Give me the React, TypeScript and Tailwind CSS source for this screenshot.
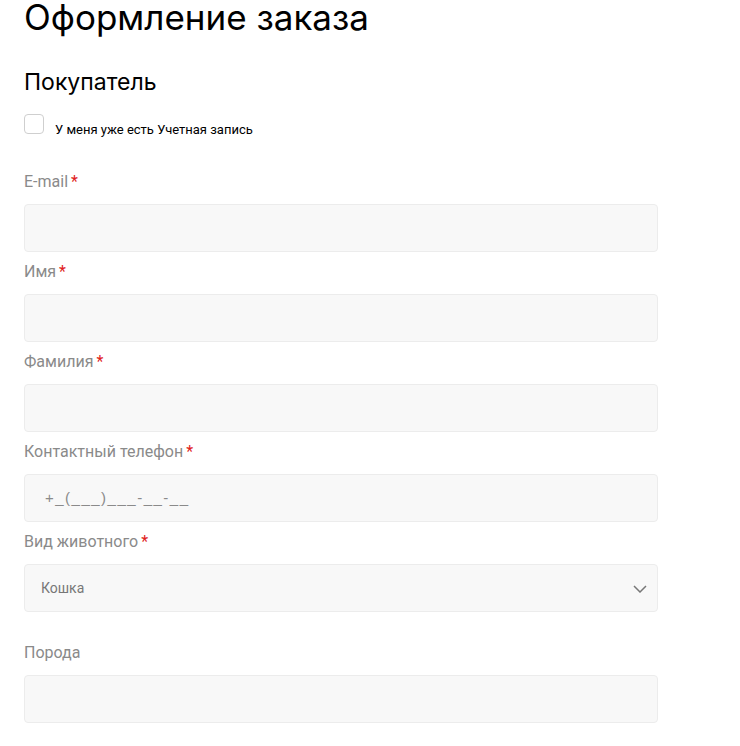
const fields = [
  { label: "E-mail", required: true },
  { label: "Имя", required: true },
  { label: "Фамилия", required: true },
  { label: "Контактный телефон", required: true, placeholder: "+_(___)___-__-__" },
];

function Label({ text, required }: { text: string; required?: boolean }) {
  return (
    <div className="h-[22px] text-[16px] leading-[22px] text-[#8a8a8a]">
      {text}
      {required ? <span className="ml-[3px] text-[#e02020]">*</span> : null}
    </div>
  );
}

export default function App() {
  return (
    <div
      className="min-h-screen bg-white pl-6"
      style={{ fontFamily: "Roboto, 'Noto Sans', sans-serif" }}
    >
      <div className="w-[634px]">
        <h1
          className="-mt-[6px] text-[35px] leading-[46px] text-black"
          style={{ fontFamily: "Inter, Roboto, sans-serif" }}
        >
          Оформление заказа
        </h1>

        <h2
          className="mt-[27px] text-[23px] leading-[30px] text-black"
          style={{ fontFamily: "Inter, Roboto, sans-serif" }}
        >
          Покупатель
        </h2>

        <label className="mt-[17px] flex items-start gap-[11px]">
          <span className="h-5 w-5 rounded-[4px] border border-[#cfcfcf] bg-white" />
          <span className="mt-[6px] text-[13px] leading-5 text-black">
            У меня уже есть Учетная запись
          </span>
        </label>

        <div className="mt-[31px] flex flex-col">
          {fields.map((f) => (
            <div key={f.label} className="mb-[9px] flex flex-col gap-[11px]">
              <Label text={f.label} required={f.required} />
              <div
                className="flex h-12 items-center rounded-[4px] border border-[#ececec] bg-[#f8f8f8] px-5 text-[15px] tracking-[1.5px] text-[#8a8a8a]"
                style={{ fontFamily: "'Liberation Sans', Arial, sans-serif" }}
              >
                {f.placeholder ?? ""}
              </div>
            </div>
          ))}

          <div className="flex flex-col gap-[11px]">
            <Label text="Вид животного" required />
            <div className="flex h-12 items-center justify-between rounded-[4px] border border-[#ececec] bg-[#f8f8f8] pl-4 pr-[10px] text-[14px] text-[#777]">
              <span>Кошка</span>
              <svg width="14" height="8" viewBox="0 0 14 8" fill="none" className="mt-[2px]">
                <path d="M1 1l6 6 6-6" stroke="#777" strokeWidth="1.5" />
              </svg>
            </div>
          </div>

          <div className="mt-[30px] flex flex-col gap-[11px]">
            <Label text="Порода" />
            <div className="h-12 rounded-[4px] border border-[#ececec] bg-[#f8f8f8]" />
          </div>
        </div>
      </div>
    </div>
  );
}
